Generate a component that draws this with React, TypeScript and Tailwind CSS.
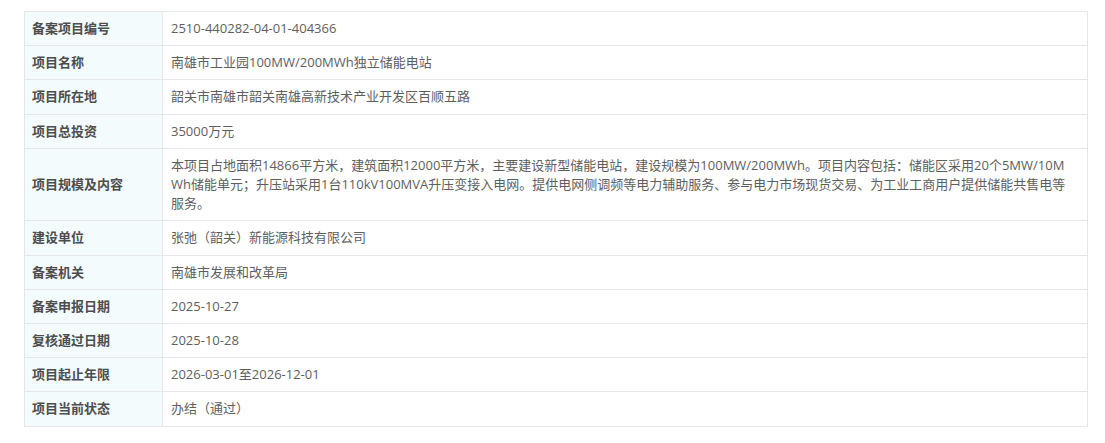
const rows: [string, string][] = [
  ['备案项目编号', '2510-440282-04-01-404366'],
  ['项目名称', '南雄市工业园100MW/200MWh独立储能电站'],
  ['项目所在地', '韶关市南雄市韶关南雄高新技术产业开发区百顺五路'],
  ['项目总投资', '35000万元'],
  [
    '项目规模及内容',
    '本项目占地面积14866平方米，建筑面积12000平方米，主要建设新型储能电站，建设规模为100MW/200MWh。项目内容包括：储能区采用20个5MW/10MWh储能单元；升压站采用1台110kV100MVA升压变接入电网。提供电网侧调频等电力辅助服务、参与电力市场现货交易、为工业工商用户提供储能共售电等服务。',
  ],
  ['建设单位', '张弛（韶关）新能源科技有限公司'],
  ['备案机关', '南雄市发展和改革局'],
  ['备案申报日期', '2025-10-27'],
  ['复核通过日期', '2025-10-28'],
  ['项目起止年限', '2026-03-01至2026-12-01'],
  ['项目当前状态', '办结（通过）'],
]

export default function App() {
  return (
    <div
      className="min-h-[443px] bg-white pt-[11px] pl-[24px] pr-[17px]"
      style={{ fontFamily: '"Open Sans", "Noto Sans CJK SC", sans-serif' }}
    >
      <table className="w-full border-collapse border border-[#e6e6e6] text-[13px] leading-[19.2px]">
        <tbody>
          {rows.map(([label, value]) => (
            <tr key={label}>
              <td className="w-[138px] border border-[#e6e6e6] bg-[#f4fbfc] px-[7px] py-[7px] align-middle font-bold text-[#4d4d4d]">
                {label}
              </td>
              <td className="border border-[#e6e6e6] pl-[8px] pr-[12px] py-[7px] align-middle break-all text-[#5e5e5e]">
                {value}
              </td>
            </tr>
          ))}
        </tbody>
      </table>
    </div>
  )
}
